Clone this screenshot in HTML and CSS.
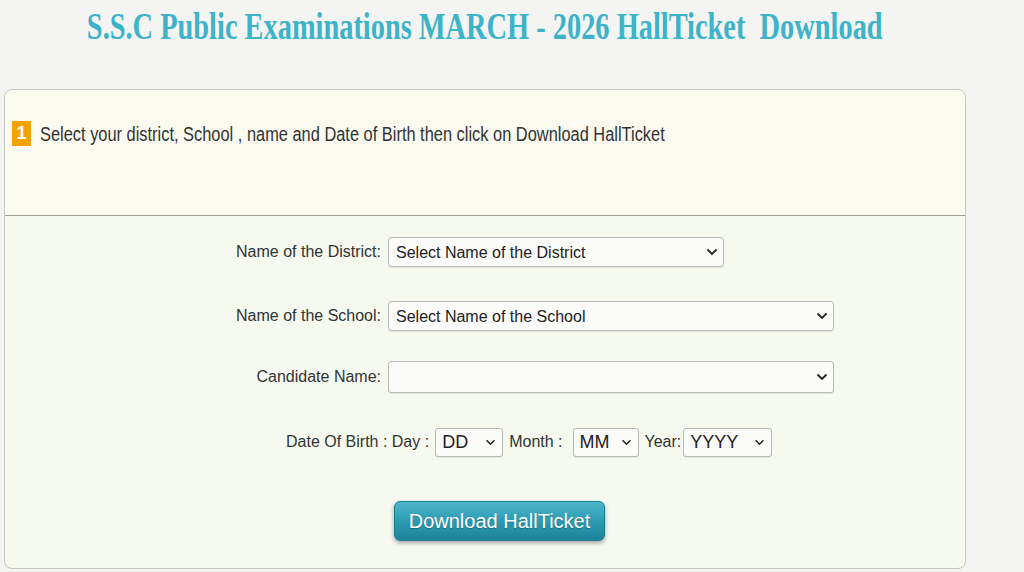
FILE: index.html
```html
<!DOCTYPE html>
<html lang="en">
<head>
<meta charset="utf-8">
<title>S.S.C Public Examinations MARCH - 2026 HallTicket Download</title>
<link rel="stylesheet" href="styles.css">
</head>
<body>
<header class="head">
  <h1 class="title"><span class="title-text">S.S.C Public Examinations MARCH - 2026 HallTicket&nbsp; Download</span></h1>
</header>
<main class="card">
  <section class="intro">
    <span class="step">1</span>
    <span class="intro-text">Select your district, School , name and Date of Birth then click on Download HallTicket</span>
  </section>
  <section class="form">
    <div class="row row-district">
      <label class="lbl" for="district">Name of the District:</label>
      <div class="sel sel-district">
        <select id="district"><option>Select Name of the District</option></select>
        <svg class="chev" viewBox="0 0 12 8" width="12" height="8"><path d="M1.5 1.5 L6 6 L10.5 1.5" fill="none" stroke="#222" stroke-width="1.8"/></svg>
      </div>
    </div>
    <div class="row row-school">
      <label class="lbl" for="school">Name of the School:</label>
      <div class="sel sel-wide">
        <select id="school"><option>Select Name of the School</option></select>
        <svg class="chev" viewBox="0 0 12 8" width="12" height="8"><path d="M1.5 1.5 L6 6 L10.5 1.5" fill="none" stroke="#222" stroke-width="1.8"/></svg>
      </div>
    </div>
    <div class="row row-cand">
      <label class="lbl" for="cand">Candidate Name:</label>
      <div class="sel sel-wide sel-tall">
        <select id="cand"><option></option></select>
        <svg class="chev" viewBox="0 0 12 8" width="12" height="8"><path d="M1.5 1.5 L6 6 L10.5 1.5" fill="none" stroke="#222" stroke-width="1.8"/></svg>
      </div>
    </div>
    <div class="dob">
      <span class="dlbl dlbl-first">Date Of Birth : Day :</span>
      <div class="sel sel-dd">
        <select><option>DD</option></select>
        <svg class="chev" viewBox="0 0 12 8" width="11" height="7"><path d="M1.5 1.5 L6 6 L10.5 1.5" fill="none" stroke="#222" stroke-width="1.8"/></svg>
      </div>
      <span class="dlbl dlbl-month">Month :</span>
      <div class="sel sel-mm">
        <select><option>MM</option></select>
        <svg class="chev" viewBox="0 0 12 8" width="11" height="7"><path d="M1.5 1.5 L6 6 L10.5 1.5" fill="none" stroke="#222" stroke-width="1.8"/></svg>
      </div>
      <span class="dlbl dlbl-year">Year:</span>
      <div class="sel sel-yy">
        <select><option>YYYY</option></select>
        <svg class="chev" viewBox="0 0 12 8" width="11" height="7"><path d="M1.5 1.5 L6 6 L10.5 1.5" fill="none" stroke="#222" stroke-width="1.8"/></svg>
      </div>
    </div>
    <div class="actions">
      <button class="btn" type="button">Download HallTicket</button>
    </div>
  </section>
</main>
</body>
</html>
```
FILE: styles.css
```css
html, body {
  margin: 0;
  padding: 0;
}
body {
  background: #f4f4f2;
  font-family: "Liberation Sans", Arial, sans-serif;
  color: #333;
  width: 1024px;
  height: 572px;
  overflow: hidden;
}
.head {
  margin-left: 4px;
  width: 962px;
  height: 89px;
}
.title {
  margin: 0;
  padding-top: 6px;
  display: flex;
  justify-content: center;
  font-family: "Liberation Serif", "Times New Roman", serif;
  font-weight: bold;
  font-size: 37px;
  line-height: 42px;
  color: #3db3c9;
  white-space: nowrap;
}
.title-text {
  display: inline-block;
  flex-shrink: 0;
  transform: scaleX(0.767);
  transform-origin: center;
}
.card {
  margin-left: 4px;
  width: 960px;
  height: 478px;
  border: 1px solid #c6c6c2;
  border-radius: 8px;
  overflow: hidden;
  background: #f5f9f0;
  display: flex;
  flex-direction: column;
}
.intro {
  height: 126px;
  box-sizing: border-box;
  background: #fafaf1;
  border-bottom: 1px solid #9a9a98;
  display: flex;
  align-items: flex-start;
  padding: 31px 0 0 7px;
  flex-shrink: 0;
}
.step {
  width: 19px;
  height: 25px;
  background: #f4a200;
  color: #fff;
  font-weight: bold;
  font-size: 18px;
  line-height: 25px;
  text-align: center;
  flex-shrink: 0;
}
.intro-text {
  display: inline-block;
  margin-left: 9px;
  margin-top: 1px;
  font-size: 20px;
  line-height: 24px;
  color: #333;
  white-space: nowrap;
  transform: scaleX(0.82);
  transform-origin: left center;
}
.form {
  padding-top: 21px;
  display: flex;
  flex-direction: column;
}
.row {
  display: grid;
  grid-template-columns: 376px auto;
  column-gap: 7px;
  align-items: center;
}
.row-school { margin-top: 34px; }
.row-cand { margin-top: 30px; }
.lbl {
  text-align: right;
  font-size: 16px;
  color: #333;
  white-space: nowrap;
}
.sel {
  position: relative;
  height: 30px;
}
.sel select {
  appearance: none;
  -webkit-appearance: none;
  width: 100%;
  height: 100%;
  box-sizing: border-box;
  border: 1px solid #b9b9b6;
  border-radius: 3px;
  background: #fbfbfa;
  box-shadow: 0 1px 1px rgba(0, 0, 0, 0.08);
  font-family: "Liberation Sans", Arial, sans-serif;
  font-size: 16px;
  color: #222;
  padding: 0 26px 0 7px;
  margin: 0;
}
.chev {
  position: absolute;
  right: 6px;
  top: 50%;
  margin-top: -4px;
  pointer-events: none;
}
.sel-district { width: 336px; }
.sel-wide { width: 446px; }
.sel-tall { height: 32px; }
.dob {
  margin-top: 34px;
  display: flex;
  align-items: center;
  padding-left: 281px;
  height: 30px;
}
.dlbl {
  font-size: 16px;
  color: #333;
  white-space: nowrap;
}
.dlbl-first { margin-right: 6px; }
.dlbl-month { margin: 0 10px 0 6px; }
.dlbl-year { margin: 0 2px 0 6px; }
.sel-dd { width: 68px; height: 29px; }
.sel-mm { width: 66px; height: 29px; }
.sel-yy { width: 89px; height: 29px; }
.sel-dd select, .sel-mm select, .sel-yy select {
  font-size: 18px;
  padding-left: 6px;
}
.sel-dd .chev, .sel-mm .chev, .sel-yy .chev {
  right: 7px;
  margin-top: -3px;
}
.actions {
  margin-top: 44px;
  padding-left: 389px;
}
.btn {
  width: 211px;
  height: 40px;
  border: 1px solid #1b7b91;
  border-radius: 6px;
  background: linear-gradient(#4bb7cd, #2b98b0 55%, #1e8199);
  box-shadow: 0 2px 4px rgba(0, 0, 0, 0.35);
  color: #fff;
  font-family: "Liberation Sans", Arial, sans-serif;
  font-size: 20px;
  text-shadow: 0 1px 1px rgba(0, 0, 0, 0.25);
  padding: 0;
  cursor: pointer;
}
```
